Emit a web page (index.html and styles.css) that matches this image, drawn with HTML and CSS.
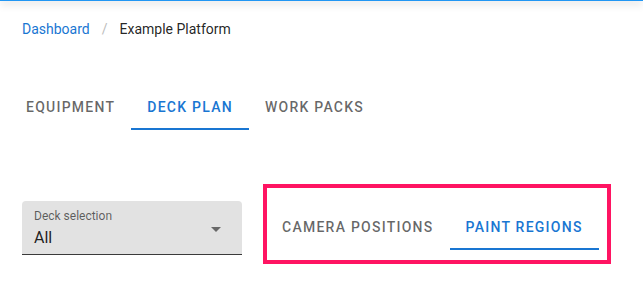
FILE: index.html
```html
<!DOCTYPE html>
<html lang="en">

<head>
  <meta charset="UTF-8" />
  <meta name="viewport" content="width=device-width, initial-scale=1.0" />
  <title>Example Platform</title>
  <link rel="stylesheet" href="styles.css">
</head>

<body>
  <div class="appbar"></div>
  <div class="page">
    <nav class="crumbs">
      <a class="crumb-link" href="#">Dashboard</a>
      <span class="crumb-sep">/</span>
      <span class="crumb-current">Example Platform</span>
    </nav>

    <div class="tabs main-tabs">
      <div class="tab">Equipment</div>
      <div class="tab active">Deck plan</div>
      <div class="tab">Work packs</div>
    </div>

    <div class="deck-row">
      <div class="select">
        <div class="select-label">Deck selection</div>
        <div class="select-value">All</div>
        <svg class="select-arrow" viewBox="0 0 24 24" width="24" height="24">
          <path d="M7 10l5 5 5-5z" />
        </svg>
      </div>

      <div class="highlight">
        <div class="tabs">
          <div class="tab">Camera positions</div>
          <div class="tab active">Paint regions</div>
        </div>
      </div>
    </div>
  </div>
</body>

</html>
```

FILE: styles.css
```css
* {
  margin: 0;
  padding: 0;
  box-sizing: border-box;
}

body {
  font-family: Roboto, "Liberation Sans", sans-serif;
  background: #fff;
  color: rgba(0, 0, 0, 0.87);
}

.appbar {
  height: 2px;
  margin-top: -1px;
  background-color: #2196f3;
  box-shadow: 0 2px 8px rgba(0, 0, 0, 0.3);
}

.page {
  padding: 18px 22px 0;
}

/* breadcrumbs */
.crumbs {
  display: flex;
  align-items: center;
  font-size: 14px;
  line-height: 20px;
}

.crumb-link {
  color: #1976d2;
  text-decoration: none;
}

.crumb-sep {
  color: #bdbdbd;
  margin: 0 12px;
}

.crumb-current {
  color: rgba(0, 0, 0, 0.87);
}

/* tabs */
.tabs {
  display: flex;
}

.main-tabs {
  margin: 43px 0 0 -12px;
}

.tab {
  height: 48px;
  padding: 3px 16px 0;
  display: flex;
  align-items: center;
  font-size: 14px;
  font-weight: 500;
  letter-spacing: 1.25px;
  text-transform: uppercase;
  color: rgba(0, 0, 0, 0.6);
  border-bottom: 2px solid transparent;
}

.tab.active {
  color: #1976d2;
  border-bottom-color: #1976d2;
}

/* deck selection row */
.deck-row {
  display: flex;
  align-items: flex-start;
  margin-top: 54px;
}

.select {
  position: relative;
  width: 220px;
  height: 54px;
  margin-top: 17px;
  background-color: #e2e2e2;
  border-radius: 4px 4px 0 0;
  border-bottom: 1px solid #3a3a3a;
  padding: 7px 12px 0;
}

.select-label {
  font-size: 12px;
  line-height: 16px;
  color: rgba(0, 0, 0, 0.6);
}

.select-value {
  font-size: 16px;
  line-height: 23px;
  margin-top: 2px;
  color: rgba(0, 0, 0, 0.87);
}

.select-arrow {
  position: absolute;
  right: 14px;
  top: 16px;
  fill: rgba(0, 0, 0, 0.54);
}

.highlight {
  margin-left: 21px;
  width: 348px;
  height: 80px;
  border: 4px solid #ff1462;
  padding: 14px 0 0;
}

.highlight .tabs {
  margin-left: -1px;
}
```
